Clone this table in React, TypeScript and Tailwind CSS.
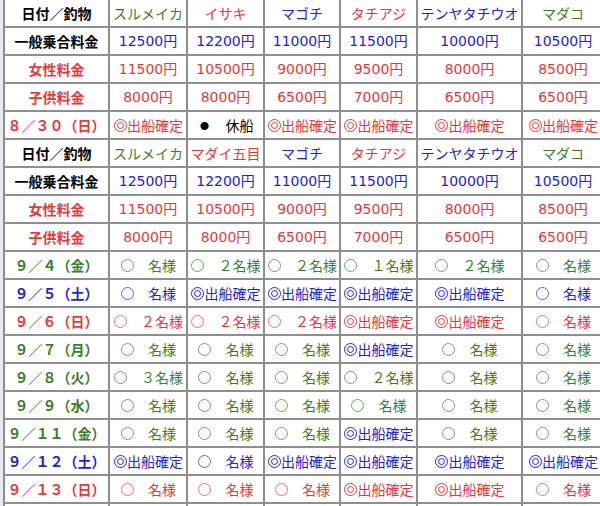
import clsx from 'clsx'

const G = 'text-[#3b7d2b]'
const R = 'text-[#e23a3a]'
const B = 'text-[#2424cc]'
const K = 'text-black'

type Cell = { text: string; color: string }
type Row = { label: string; labelColor: string; kind: 'head' | 'price' | 'day'; cells: Cell[] }

const jp = "font-['Noto_Sans_CJK_JP',sans-serif]"
const num = "font-['DejaVu_Sans','Noto_Sans_CJK_JP',sans-serif]"

const fill = (color: string, texts: string[]): Cell[] => texts.map((text) => ({ text, color }))

const OK = '◎出船確定'
const N = '○　名様'

const priceRows: Row[] = [
  {
    label: '一般乗合料金',
    labelColor: K,
    kind: 'price',
    cells: fill(B, ['12500円', '12200円', '11000円', '11500円', '10000円', '10500円']),
  },
  {
    label: '女性料金',
    labelColor: R,
    kind: 'price',
    cells: fill(R, ['11500円', '10500円', '9000円', '9500円', '8000円', '8500円']),
  },
  {
    label: '子供料金',
    labelColor: R,
    kind: 'price',
    cells: fill(R, ['8000円', '8000円', '6500円', '7000円', '6500円', '6500円']),
  },
]

const rows: Row[] = [
  {
    label: '日付／釣物',
    labelColor: K,
    kind: 'head',
    cells: [
      { text: 'スルメイカ', color: G },
      { text: 'イサキ', color: R },
      { text: 'マゴチ', color: B },
      { text: 'タチアジ', color: R },
      { text: 'テンヤタチウオ', color: B },
      { text: 'マダコ', color: G },
    ],
  },
  ...priceRows,
  {
    label: '８／３０（日）',
    labelColor: R,
    kind: 'day',
    cells: [
      { text: OK, color: R },
      { text: 'REST', color: K },
      ...fill(R, [OK, OK, OK, OK]),
    ],
  },
  {
    label: '日付／釣物',
    labelColor: K,
    kind: 'head',
    cells: [
      { text: 'スルメイカ', color: G },
      { text: 'マダイ五目', color: R },
      { text: 'マゴチ', color: B },
      { text: 'タチアジ', color: R },
      { text: 'テンヤタチウオ', color: B },
      { text: 'マダコ', color: G },
    ],
  },
  ...priceRows,
  { label: '９／４（金）', labelColor: G, kind: 'day', cells: fill(G, [N, '○　２名様', '○　２名様', '○　１名様', '○　２名様', N]) },
  { label: '９／５（土）', labelColor: B, kind: 'day', cells: fill(B, [N, OK, OK, OK, OK, N]) },
  { label: '９／６（日）', labelColor: R, kind: 'day', cells: fill(R, ['○　２名様', '○　２名様', '○　２名様', OK, OK, N]) },
  {
    label: '９／７（月）',
    labelColor: G,
    kind: 'day',
    cells: [...fill(G, [N, N, N]), { text: OK, color: B }, ...fill(G, [N, N])],
  },
  { label: '９／８（火）', labelColor: G, kind: 'day', cells: fill(G, ['○　３名様', N, N, '○　２名様', N, N]) },
  { label: '９／９（水）', labelColor: G, kind: 'day', cells: fill(G, [N, N, N, N, N, N]) },
  {
    label: '９／１１（金）',
    labelColor: G,
    kind: 'day',
    cells: [...fill(G, [N, N, N]), { text: OK, color: B }, ...fill(G, [N, N])],
  },
  { label: '９／１２（土）', labelColor: B, kind: 'day', cells: fill(B, [OK, N, OK, OK, OK, OK]) },
  { label: '９／１３（日）', labelColor: R, kind: 'day', cells: fill(R, [N, N, N, OK, OK, N]) },
  { label: '', labelColor: K, kind: 'day', cells: fill(K, ['', '', '', '', '', '']) },
]

// 〇 and ◎ drawn as rings so they keep the size of the original marks
function Mark({ double }: { double?: boolean }) {
  return (
    <span className="w-[14px] h-[14px] shrink-0 flex items-center justify-center">
      {double ? (
        <span className="w-[13px] h-[13px] shrink-0 rounded-full border border-current flex items-center justify-center">
          <span className="w-[7px] h-[7px] shrink-0 rounded-full border border-current" />
        </span>
      ) : (
        <span className="w-[13px] h-[13px] shrink-0 rounded-full border border-current opacity-70" />
      )}
    </span>
  )
}

function CellText({ cell, kind }: { cell: Cell; kind: Row['kind'] }) {
  if (cell.text === 'REST') {
    return (
      <span className="flex items-center">
        <span className="w-[14px] text-center text-[9px]">●</span>
        <span>　休船</span>
      </span>
    )
  }
  const first = cell.text[0]
  if (first === '○' || first === '◎') {
    return (
      <span className="flex items-center">
        <Mark double={first === '◎'} />
        <span>{cell.text.slice(1)}</span>
      </span>
    )
  }
  return <span className={kind === 'price' ? num : jp}>{cell.text}</span>
}

export default function App() {
  return (
    <div className="w-[600px] h-[506px] overflow-hidden bg-[#e8eaf0] pl-[3px]">
      <div
        className={clsx(
          'grid w-max -mt-[2px] grid-cols-[103px_76px_75px_74px_75px_103px_80px] auto-rows-[26px] gap-[2px] p-[2px] bg-[#8e8e8e] text-[14px] leading-none',
          jp,
        )}
      >
        {rows.map((row, i) => (
          <div key={i} className="contents">
            <div className={clsx('bg-white flex items-center justify-center whitespace-nowrap font-bold', row.labelColor)}>
              {row.label}
            </div>
            {row.cells.map((cell, j) => (
              <div
                key={j}
                className={clsx('bg-white flex items-center justify-center whitespace-nowrap', cell.color)}
              >
                <CellText cell={cell} kind={row.kind} />
              </div>
            ))}
          </div>
        ))}
      </div>
    </div>
  )
}
